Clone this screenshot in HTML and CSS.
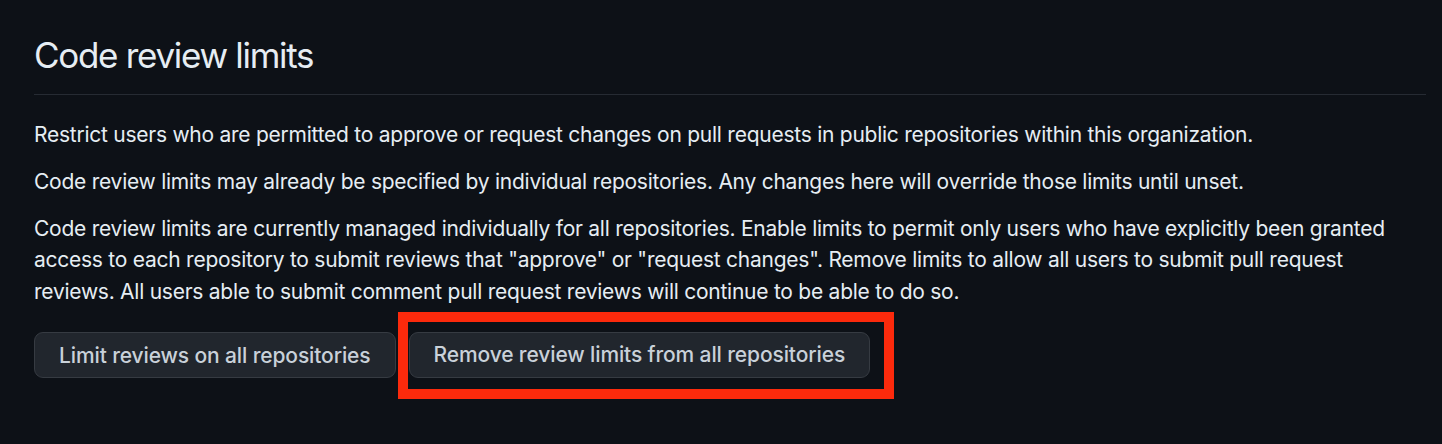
FILE: index.html
```html
<!DOCTYPE html>
<html lang="en">
  <head>
    <meta charset="UTF-8" />
    <meta name="viewport" content="width=device-width, initial-scale=1.0" />
    <title>Code review limits</title>
    <link rel="stylesheet" href="styles.css">
  </head>
  <body>
    <div class="settings">
      <div class="subhead">
        <h2 class="subhead-heading">Code review limits</h2>
      </div>
      <p>
        Restrict users who are permitted to approve or request changes on pull requests in public repositories within this organization.
      </p>
      <p>
        Code review limits may already be specified by individual repositories. Any changes here will override those limits until unset.
      </p>
      <p class="last">
        Code review limits are currently managed individually for all repositories. Enable limits to permit only users who have explicitly been granted access to each repository to submit reviews that "approve" or "request changes". Remove limits to allow all users to submit pull request reviews. All users able to submit comment pull request reviews will continue to be able to do so.
      </p>
      <div class="actions">
        <button class="btn" type="button">Limit reviews on all repositories</button>
        <div class="highlight">
          <button class="btn" type="button">Remove review limits from all repositories</button>
        </div>
      </div>
    </div>
  </body>
</html>
```

FILE: styles.css
```css
body {
  margin: 0;
  background: #0d1117;
  color: #e6edf3;
  font-family: "Inter", "Noto Sans", sans-serif;
  font-size: 21px;
  line-height: 1.5;
  letter-spacing: -0.25px;
}

.settings {
  padding: 29px 16px 0 34px;
}

.subhead {
  border-bottom: 1px solid #262b33;
  padding-bottom: 12px;
  margin-bottom: 24px;
}

.subhead-heading {
  margin: 0;
  font-size: 35px;
  font-weight: 400;
  line-height: 1.5;
  letter-spacing: -1.3px;
}

p {
  margin: 0 0 15.5px;
}

p.last {
  margin-bottom: 4.5px;
}

.actions {
  display: flex;
  align-items: center;
  gap: 2px;
}

.btn {
  height: 46px;
  padding: 0 24px;
  background: #21262d;
  color: #c9d1d9;
  border: 1px solid #363b42;
  border-radius: 9px;
  font-family: inherit;
  font-size: 21px;
  font-weight: 500;
  letter-spacing: -0.12px;
  cursor: pointer;
}

.highlight {
  padding: 10px 14px 11px 1px;
  border: 10px solid #fc2a0c;
}
```
